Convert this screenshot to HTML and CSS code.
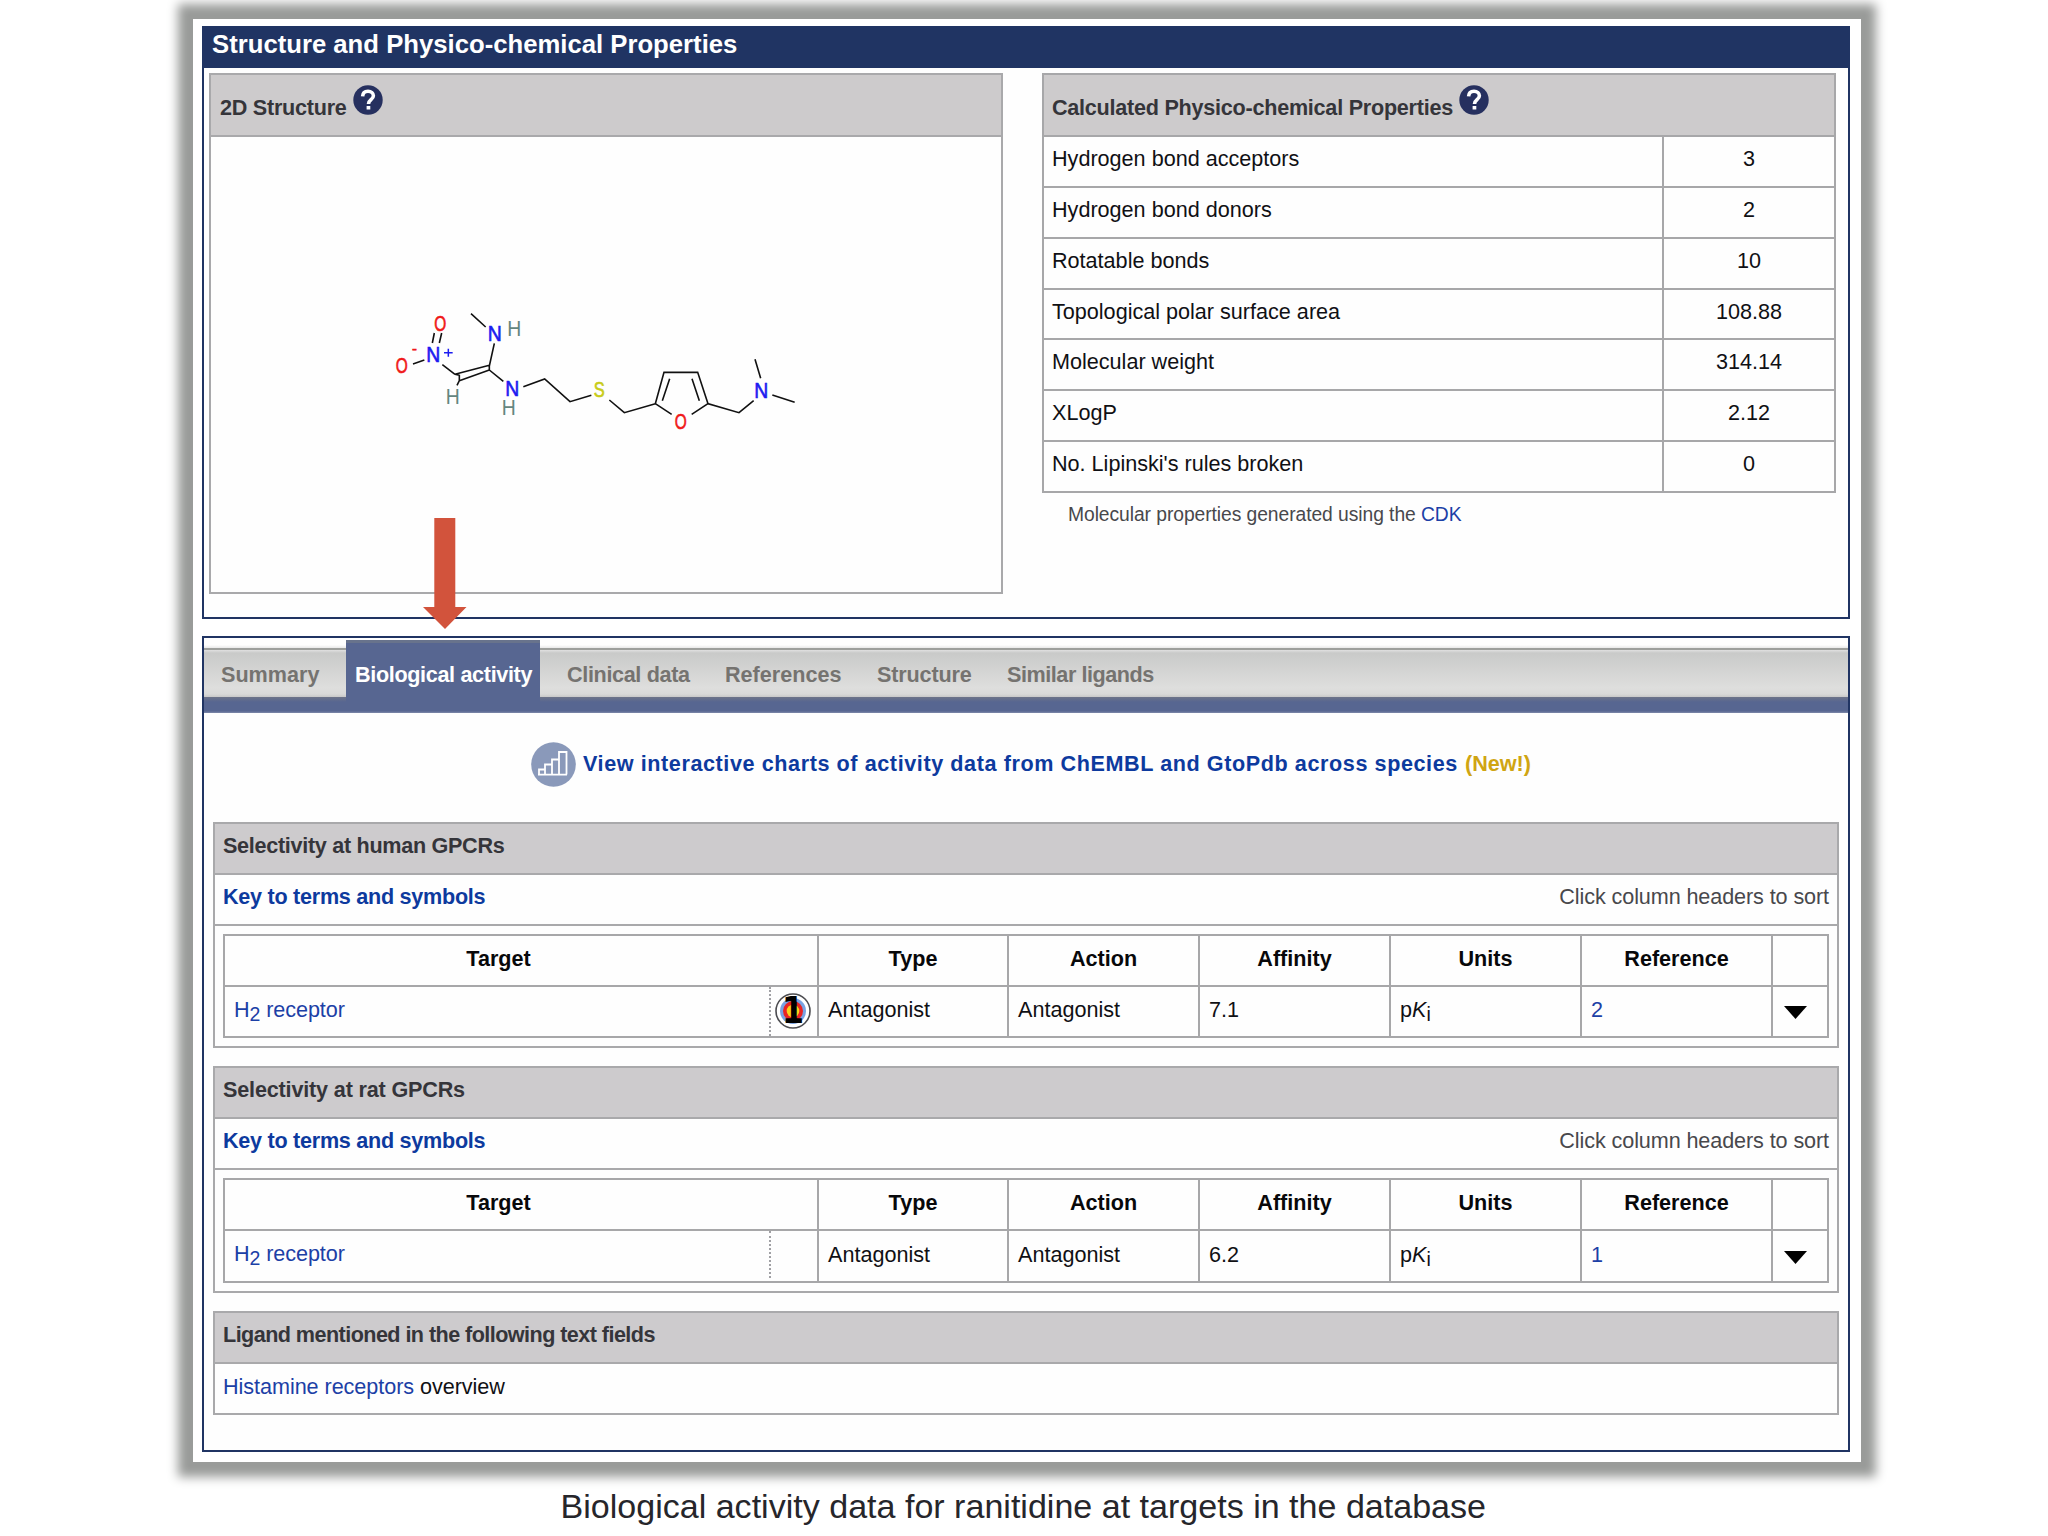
FILE: index.html
```html
<!DOCTYPE html>
<html lang="en">
<head>
<meta charset="utf-8">
<title>Ranitidine: biological activity</title>
<link rel="stylesheet" href="styles.css">
</head>
<body>
<figure class="figure">
  <div class="frame">
    <section class="panel properties">
      <h2 class="panel-title">Structure and Physico-chemical Properties</h2>
      <div class="columns">
        <div class="structure">
          <div class="box-head"><span>2D Structure</span>
            <svg class="help" viewBox="0 0 30 30"><circle cx="15" cy="15" r="14.7"/><path d="M9.6 11.4C9.8 7.8 12 6.3 15 6.3c3.2 0 5.400 1.800 5.400 4.500 0 3.900-4.900 3.900-4.900 8.100"/><rect x="13.600" y="21" width="3.700" height="3.500"/></svg>
          </div>
          <svg class="molecule" viewBox="-507 -459 2367 1362">
            <g class="bonds">
              <path d="M273 71L317 111M343 160L328 228M163 129L157 159M185 129L178 159M99 222L133 210M187 224L225 253M225 253L328 226M238 272L328 240M328 226V240M225 253L238 256V272L231 286M328 240L370 274M430 290L494 267L570 335L634 316M688 330L733 368L826 341M826 341L852 247H953L984 341M847 332L869 266M936 266L958 332M826 341L875 373M935 373L984 341L1077 368L1121 332M1142 265L1125 208M1177 315L1244 337"/>
            </g>
            <g class="atoms">
              <g class="oxygen"><text x="163" y="123" textLength="36" lengthAdjust="spacingAndGlyphs">O</text><text x="47" y="248" textLength="36" lengthAdjust="spacingAndGlyphs">O</text><text x="884" y="416" textLength="36" lengthAdjust="spacingAndGlyphs">O</text><text x="96" y="191" class="charge">-</text></g>
              <g class="nitrogen"><text x="139" y="216" textLength="42" lengthAdjust="spacingAndGlyphs">N</text><text x="323" y="154" textLength="42" lengthAdjust="spacingAndGlyphs">N</text><text x="376" y="317" textLength="42" lengthAdjust="spacingAndGlyphs">N</text><text x="1123" y="323" textLength="42" lengthAdjust="spacingAndGlyphs">N</text><path d="M192 188H218M205 176V200"/></g>
              <g class="sulfur"><text x="641" y="322" textLength="33" lengthAdjust="spacingAndGlyphs">S</text></g>
              <g class="hydrogen"><text x="382" y="138" textLength="42" lengthAdjust="spacingAndGlyphs">H</text><text x="197" y="343" textLength="42" lengthAdjust="spacingAndGlyphs">H</text><text x="365" y="375" textLength="42" lengthAdjust="spacingAndGlyphs">H</text></g>
            </g>
          </svg>
        </div>
        <div class="calculated">
          <div class="props">
            <div class="box-head wide"><span>Calculated Physico-chemical Properties</span>
              <svg class="help" viewBox="0 0 30 30"><circle cx="15" cy="15" r="14.7"/><path d="M9.6 11.4C9.8 7.8 12 6.3 15 6.3c3.2 0 5.400 1.800 5.400 4.500 0 3.900-4.900 3.900-4.900 8.100"/><rect x="13.600" y="21" width="3.700" height="3.500"/></svg>
            </div>
            <div class="cell">Hydrogen bond acceptors</div><div class="cell num">3</div>
            <div class="cell">Hydrogen bond donors</div><div class="cell num">2</div>
            <div class="cell">Rotatable bonds</div><div class="cell num">10</div>
            <div class="cell">Topological polar surface area</div><div class="cell num">108.88</div>
            <div class="cell">Molecular weight</div><div class="cell num">314.14</div>
            <div class="cell">XLogP</div><div class="cell num">2.12</div>
            <div class="cell">No. Lipinski's rules broken</div><div class="cell num">0</div>
          </div>
          <p class="credit">Molecular properties generated using the <a>CDK</a></p>
        </div>
      </div>
    </section>

    <section class="panel activity">
      <nav class="tabs">
        <a class="tab summary">Summary</a>
        <a class="tab active">Biological activity</a>
        <a class="tab clinical">Clinical data</a>
        <a class="tab refs">References</a>
        <a class="tab struct">Structure</a>
        <a class="tab similar">Similar ligands</a>
      </nav>
      <div class="charts">
        <svg class="chart-icon" viewBox="0 0 45 45"><circle cx="22.500" cy="22.500" r="22.300"/><path d="M8 32.500V27.500H14V32.500M14 27.500V22.500H21V32.500M21 22.500V17.500H28V32.500M28 17.500V10H35.500V32.500M7 32.700H36"/></svg>
        <a class="charts-link">View interactive charts of activity data from ChEMBL and GtoPdb across species</a>
        <span class="new">(New!)</span>
      </div>

      <div class="box human">
        <div class="cell head">Selectivity at human GPCRs</div>
        <div class="cell key"><a>Key to terms and symbols</a><span>Click column headers to sort</span></div>
        <div class="holder">
          <div class="grid">
            <div class="cell th target-head">Target</div><div class="cell th">Type</div><div class="cell th">Action</div><div class="cell th">Affinity</div><div class="cell th">Units</div><div class="cell th">Reference</div><div class="cell th"></div>
            <div class="cell target"><a>H<sub>2</sub> receptor</a>
              <span class="mark"><svg class="primary" viewBox="0 0 36 36"><circle cx="18" cy="18" r="17" fill="#fff" stroke="#4c4c50" stroke-width="1.600"/><circle cx="18" cy="18" r="13" fill="#79a2e2"/><circle cx="18" cy="18" r="10" fill="#e92424"/><circle cx="18" cy="18" r="6.300" fill="#f8d21c"/><text x="7" y="30" textLength="22" lengthAdjust="spacingAndGlyphs">1</text></svg></span>
            </div>
            <div class="cell">Antagonist</div><div class="cell">Antagonist</div><div class="cell">7.1</div><div class="cell"><span>p<i>K</i><sub>i</sub></span></div><div class="cell"><a>2</a></div>
            <div class="cell more"><svg viewBox="0 0 23 13"><path d="M0 0H23L11.500 13Z"/></svg></div>
          </div>
        </div>
      </div>

      <div class="box rat">
        <div class="cell head">Selectivity at rat GPCRs</div>
        <div class="cell key"><a>Key to terms and symbols</a><span>Click column headers to sort</span></div>
        <div class="holder">
          <div class="grid">
            <div class="cell th target-head">Target</div><div class="cell th">Type</div><div class="cell th">Action</div><div class="cell th">Affinity</div><div class="cell th">Units</div><div class="cell th">Reference</div><div class="cell th"></div>
            <div class="cell target"><a>H<sub>2</sub> receptor</a><span class="mark"></span></div>
            <div class="cell">Antagonist</div><div class="cell">Antagonist</div><div class="cell">6.2</div><div class="cell"><span>p<i>K</i><sub>i</sub></span></div><div class="cell"><a>1</a></div>
            <div class="cell more"><svg viewBox="0 0 23 13"><path d="M0 0H23L11.500 13Z"/></svg></div>
          </div>
        </div>
      </div>

      <div class="box mentions">
        <div class="cell head">Ligand mentioned in the following text fields</div>
        <div class="cell"><span class="overview"><a>Histamine receptors</a> overview</span></div>
      </div>
    </section>

    <svg class="arrow" viewBox="0 0 44 111"><path d="M11.300 0H32.300V89H43.500L22 111L0 89H11.300Z"/></svg>
  </div>
  <figcaption class="caption">Biological activity data for ranitidine at targets in the database</figcaption>
</figure>
</body>
</html>
```
FILE: styles.css
```css
* { box-sizing: border-box; }
body {
  margin: 0;
  width: 2048px;
  height: 1536px;
  overflow: hidden;
  background: #fff;
  color: #101014;
  font-family: "Liberation Sans", Arial, sans-serif;
  font-size: 21.6px;
  line-height: 26px;
}
a { color: #1c40a6; }
sub { font-size: 19.5px; line-height: 0; vertical-align: -3.5px; }
.figure { margin: 0; padding: 19px 187px 0 193px; }
.frame {
  position: relative;
  height: 1443px;
  padding: 7px 11px 10px 9px;
  display: flex;
  flex-direction: column;
  gap: 17px;
  background: #fff;
  box-shadow: 0 0 10px 15px #999b99;
}
.panel { border: 2px solid #203463; background: #fefefe; }
.properties { height: 593px; }
.activity { height: 816px; }
.panel-title {
  margin: 0;
  height: 40px;
  padding: 1px 8px;
  background: #203463;
  color: #fff;
  font-size: 25.7px;
  line-height: 30px;
}
.columns { display: flex; gap: 39px; padding: 5px 12px 0 5px; }
.structure { width: 794px; height: 521px; border: 2px solid #a9a9ab; }
.box-head {
  display: flex;
  gap: 6px;
  height: 60px;
  padding: 20px 8px 0;
  background: #cdcbcc;
  color: #35353a;
  font-weight: bold;
  letter-spacing: -0.25px;
}
.structure .box-head { height: 62px; padding-left: 9px; border-bottom: 2px solid #a9a9ab; }
.help { width: 30px; height: 30px; margin-top: -10px; }
.help circle { fill: #26305f; }
.help path { fill: none; stroke: #fff; stroke-width: 3.6; }
.help rect { fill: #fff; }
.molecule { display: block; width: 789px; height: 454px; }
.bonds { fill: none; stroke: #111; stroke-width: 4.8; }
.atoms { font-size: 66px; stroke-width: 2; }
.charge { font-size: 44px; }
.oxygen { fill: #f01818; stroke: #f01818; }
.nitrogen { fill: #1c1cf0; stroke: #1c1cf0; }
.nitrogen path { stroke-width: 4.5; }
.sulfur { fill: #c8cc18; stroke: #c8cc18; }
.hydrogen { fill: #64867f; }
.calculated { width: 794px; }
.props {
  display: grid;
  grid-template-columns: 618px 170px;
  grid-template-rows: 60px 49px 49px 49px 48px 49px 49px 49px;
  gap: 2px;
  padding: 2px;
  background: #a7a7a9;
}
.wide { grid-column: 1 / 3; }
.cell { display: flex; align-items: center; padding: 0 8px 4px; background: #fefefe; white-space: pre; }
.props .cell { padding-bottom: 5px; }
.num { justify-content: center; }
.credit { margin: 9px 0 0 26px; font-size: 19.3px; letter-spacing: -0.07px; color: #48484c; }

.tabs {
  display: flex;
  height: 75px;
  padding-top: 2px;
  background: linear-gradient(#fefefe 7px, #e8e8e8 10px, #9d9f9c 10px, #9d9f9c 12px, #e0e0e0 12px, #c9cac9 15px, #dededd 50px, #d9d9d8 56px, #c8c8c8 59px, #6d7388 59px, #576691 64px, #576691 73px, #7f8aaa 75px);
}
.tab { font-weight: bold; color: #757370; padding-top: 22px; white-space: nowrap; }
.summary { width: 142px; padding-left: 17px; }
.active { width: 194px; padding-left: 9px; color: #fff; background: #576691; border-top: 3px solid #68738c; padding-top: 19px; height: 68px; letter-spacing: -0.34px; }
.clinical { width: 185px; padding-left: 27px; letter-spacing: -0.35px; }
.refs { width: 152px; }
.struct { width: 130px; letter-spacing: -0.15px; }
.similar { letter-spacing: -0.45px; }

.charts { display: flex; height: 109px; padding: 29px 0 0 327px; font-weight: bold; }
.chart-icon { width: 45px; height: 45px; margin-right: 7px; }
.chart-icon circle { fill: #8a99ba; }
.chart-icon path { fill: none; stroke: #fff; stroke-width: 1.8; }
.charts-link, .key a { color: #0d3a9e; }
.charts-link { width: 882px; padding-top: 9px; letter-spacing: 0.58px; white-space: nowrap; }
.new { padding-top: 9px; color: #d0a512; }

.box {
  width: 1626px;
  margin: 0 0 18px 9px;
  border: 2px solid #a9a9ab;
  display: grid;
  grid-template-rows: 49px 49px auto;
  gap: 2px;
  background: #a9a9ab;
}
.head { background: #cdcbcd; color: #35353a; font-weight: bold; }
.human .head { letter-spacing: -0.3px; }
.rat .head { letter-spacing: -0.17px; }
.mentions .head { letter-spacing: -0.56px; }
.overview { letter-spacing: -0.05px; }
.key { justify-content: space-between; }
.box .head, .box .key { padding-bottom: 5px; }
.key a { font-weight: bold; letter-spacing: -0.27px; }
.key span { color: #48484c; letter-spacing: -0.1px; }
.holder { padding: 8px; background: #fefefe; }
.grid {
  display: grid;
  grid-template-columns: 592px 188px 189px 189px 189px 189px 1fr;
  grid-template-rows: 49px 49px;
  gap: 2px;
  padding: 2px;
  background: #a7a7a9;
}
.grid .cell { padding-left: 9px; }
.rat .grid { grid-template-rows: 49px 50px; }
.grid .th { justify-content: center; font-weight: bold; color: #08080a; padding-left: 8px; }
.grid .target-head { padding-right: 53px; }
.target { justify-content: space-between; }
.grid .target { padding: 0 0 0 9px; }
.target a { padding-bottom: 4px; letter-spacing: -0.08px; }
.rat .cell:nth-child(n+8):not(.more) { padding-bottom: 3px; }
.rat .grid .target { padding-bottom: 0; }
.rat .target a { padding-bottom: 2px; }
.mark { align-self: stretch; width: 48px; border-left: 2px dotted #a0a0a4; padding: 6px 0 0 4px; }
.primary { display: block; width: 36px; height: 36px; overflow: visible; }
.primary text { font: bold 38px/1 "DejaVu Sans", sans-serif; fill: #000; }
.grid .more { justify-content: center; padding: 2px 10px 0 0; }
.more svg { width: 23px; height: 13px; }
.mentions { grid-template-rows: 49px 49px; margin-bottom: 0; }

.arrow { position: absolute; left: 229.500px; top: 499px; width: 44px; height: 111px; }
.arrow path { fill: #d2533c; }
.caption { padding-top: 25px; margin-left: 367.500px; font-size: 34.05px; line-height: 39px; color: #26262b; white-space: nowrap; }
```
